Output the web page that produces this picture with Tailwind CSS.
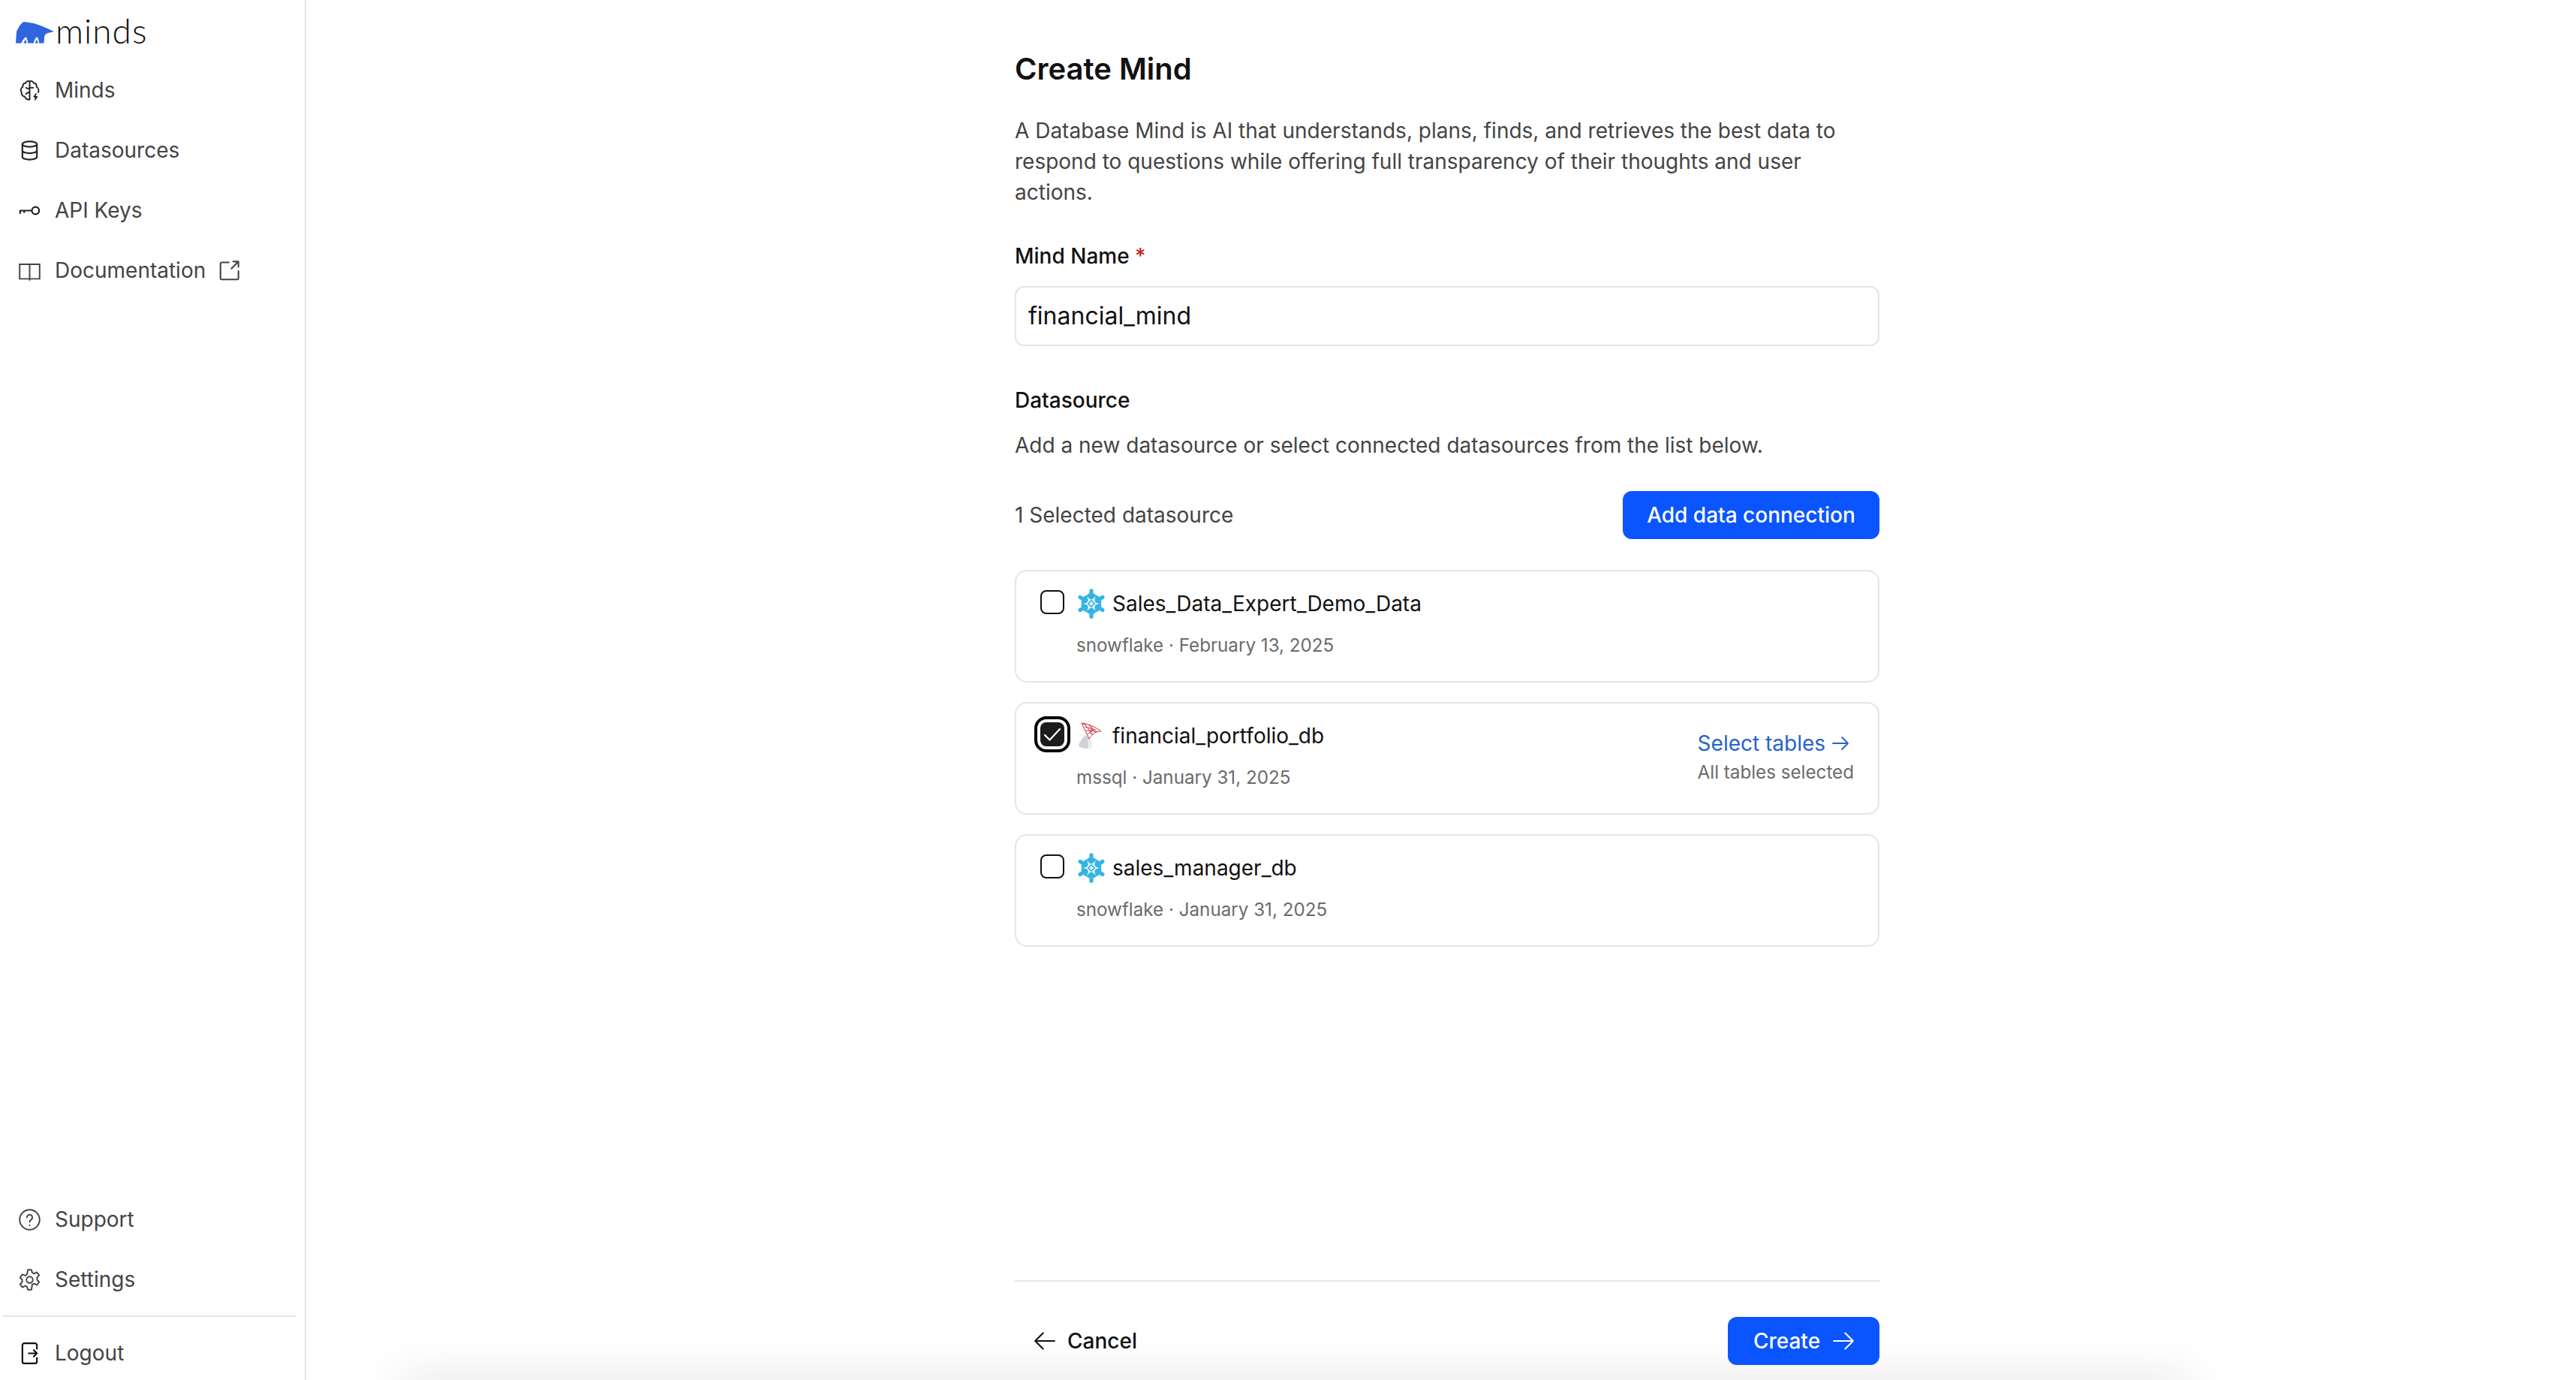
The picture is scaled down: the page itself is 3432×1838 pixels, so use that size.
<!DOCTYPE html>
<html lang="en">

<head>
    <meta charset="UTF-8">
    <title>Create Mind</title>
    <script src="https://cdn.jsdelivr.net/npm/@tailwindcss/browser@4"></script>
</head>

<body class="bg-white font-['Inter',sans-serif] text-[#111] overflow-hidden">
    <!-- snowflake logo, used by two of the rows -->
    <svg class="hidden">
        <symbol id="snowflake" viewBox="0 0 40 40">
            <g id="arm" fill="none" stroke="#33b4e4">
                <path stroke-width="5.200" stroke-linecap="round" d="M20 2.800v9"/>
                <path stroke-width="4.200" d="M14.800 7.800l4.700 4.700M25.200 7.800l-4.700 4.700"/>
            </g>
            <use href="#arm" transform="rotate(60 20 20)"/>
            <use href="#arm" transform="rotate(120 20 20)"/>
            <use href="#arm" transform="rotate(180 20 20)"/>
            <use href="#arm" transform="rotate(240 20 20)"/>
            <use href="#arm" transform="rotate(300 20 20)"/>
            <path fill="#33b4e4" d="M20 14.500 25.500 20 20 25.500 14.500 20z"/>
            <path fill="#fff" d="M20 17 23 20 20 23 17 20z"/>
            <path fill="#8fd8f2" d="M20 18.700 21.300 20 20 21.300 18.700 20z"/>
        </symbol>
    </svg>

    <div class="flex h-[1838px] w-[3432px]">
        <!-- sidebar -->
        <aside class="flex flex-col w-[408px] shrink-0 border-r-2 border-[#e5e5e5] text-[28px] text-[#444]">
            <div class="flex items-end h-20 pl-[21px] pb-[22px] gap-[2px]">
                <svg class="w-[51px] h-[29px]" viewBox="0 0 51 29">
                    <path fill="#2f66e0" d="M0 28.500 1 13C3 9 6 3 9 1L11 0 24 2C30 4 36 6 40 8L51 13 43 15C39 16 38 19 38 22L37.500 28.500H31C31 25 30 22 28 20 26 22 24 25 24 28.500H16C16 25 15 22 13.500 20 11 22 8.500 25 7.500 28.500Z"/>
                    <path fill="#2f66e0" d="M10.500 28.500C11 26.500 12 25 13 24 14 25.500 14.500 27 14.500 28.500ZM26 28.500C26 26.500 27 25 28 24 29 25.500 29.500 27 29.500 28.500Z"/>
                </svg>
                <span class="font-['Lato',sans-serif] font-light text-[46px] leading-none text-[#111] tracking-[1px] -mb-[6px]">minds</span>
            </div>
            <nav class="flex flex-col">
                <a class="flex items-center h-20 pl-[25px] gap-[19px]">
                    <svg class="w-[29px] h-[29px]" viewBox="0 0 24 24" fill="none" stroke="#222" stroke-width="1.600" stroke-linecap="round" stroke-linejoin="round"><path d="M12 2v20M12 2c-2-1-4 0-4.500 2C5 4 4 6 4.500 8 2.500 9 1.500 12 3 14c-.5 2.500 1.500 4.500 3.500 4.500C7 21 10 22.500 12 22M12 2c2-1 4 0 4.500 2C19 4 20 6 19.500 8c2 1 3 3.500 2 6M8 9c1 1 2.500 1 4 .5M12 14c-1.500 0-3 .5-4 2M16 9h-4M19 16l-2 3h3l-2 3"/></svg>
                    Minds
                </a>
                <a class="flex items-center h-20 pl-[25px] gap-[19px]">
                    <svg class="w-[29px] h-[29px]" viewBox="0 0 24 24" fill="none" stroke="#222" stroke-width="1.800"><ellipse cx="12" cy="5" rx="8" ry="3"/><path d="M4 5v14c0 1.700 3.600 3 8 3s8-1.300 8-3V5M4 12c0 1.700 3.600 3 8 3s8-1.300 8-3"/></svg>
                    Datasources
                </a>
                <a class="flex items-center h-20 pl-[25px] gap-[19px]">
                    <svg class="w-[29px] h-[29px]" viewBox="0 0 24 24" fill="none" stroke="#222" stroke-width="1.800"><circle cx="18.500" cy="12" r="4"/><path d="M14.500 12H1M1.500 12v3.500M6 12v2.500"/></svg>
                    API Keys
                </a>
                <a class="flex items-center h-20 pl-[25px] gap-[19px]">
                    <svg class="w-[29px] h-[29px]" viewBox="0 0 24 24" fill="none" stroke="#444" stroke-width="1.600"><path d="M12 5H1v16h11M12 5h11v16H12M12 5v18"/></svg>
                    <span>Documentation</span>
                    <svg class="w-[28px] h-[28px] -ml-[1px]" viewBox="0 0 24 24" fill="none" stroke="#444" stroke-width="1.800" stroke-linecap="round" stroke-linejoin="round"><path d="M11 3H3a1.500 1.500 0 0 0-1.500 1.500v16.500A1.500 1.500 0 0 0 3 22.500h17.500a1.500 1.500 0 0 0 1.500-1.500v-8M14 10 22 2M16 2h6v6"/></svg>
                </a>
            </nav>
            <div class="mt-auto flex flex-col">
                <a class="flex items-center h-20 pl-[25px] gap-[19px]">
                    <svg class="w-[29px] h-[29px]" viewBox="0 0 24 24" fill="none" stroke="#444" stroke-width="1.600" stroke-linecap="round"><circle cx="12" cy="12" r="11"/><path d="M9 9.500a3 3 0 1 1 4.500 2.600c-1 .6-1.500 1.200-1.500 2.400M12 18v.2"/></svg>
                    Support
                </a>
                <a class="flex items-center h-20 pl-[25px] gap-[19px]">
                    <svg class="w-[29px] h-[29px]" viewBox="0 0 24 24" fill="none" stroke="#444" stroke-width="1.600" stroke-linejoin="round"><circle cx="12" cy="12" r="3.500"/><path d="M10 1h4l.8 3.200 2.200 1 3-1.500 2.500 3.300-2.300 2.500v2.500l2.300 2.500-2.500 3.300-3-1.500-2.200 1L14 23h-4l-.8-3.200-2.200-1-3 1.500L1.500 17l2.300-2.500V12L1.500 9.500 4 6l3 1.500 2.200-1.500z"/></svg>
                    Settings
                </a>
                <div class="h-[2px] bg-[#e5e5e5] mt-2 ml-1 mr-3"></div>
                <a class="flex items-center h-[84px] pt-3 pl-[25px] gap-[19px]">
                    <svg class="w-[29px] h-[29px]" viewBox="0 0 24 24" fill="none" stroke="#111" stroke-width="1.800" stroke-linecap="round" stroke-linejoin="round"><path d="M20 7V3a2 2 0 0 0-2-2H6a2 2 0 0 0-2 2v18a2 2 0 0 0 2 2h12a2 2 0 0 0 2-2v-4M11 12h9M16.500 8.500 20 12l-3.500 3.500"/></svg>
                    Logout
                </a>
            </div>
        </aside>

        <!-- main -->
        <main class="relative flex-1 min-w-0">
            <!-- shadow along the bottom edge -->
            <div class="absolute top-full left-[122px] right-[512px] h-5 shadow-[0_0_60px_rgba(0,0,0,0.18)]"></div>

            <div class="relative flex flex-col w-[1152px] h-full ml-[944px] text-[28px]">
                <h1 class="mt-[68px] text-[40px] leading-[48px] font-semibold text-[#111]">Create Mind</h1>
                <p class="mt-[38px] leading-[41px] text-[#444]">A Database Mind is AI that understands, plans, finds, and retrieves the best data to respond to questions while offering full transparency of their thoughts and user actions.</p>
                <label class="mt-[44px] leading-10 font-medium text-[#111]">Mind Name <span class="text-[#d02020]">*</span></label>
                <div class="flex items-center mt-[20px] h-20 px-4 border-2 border-[#e5e5e5] rounded-xl text-[32px] text-[#111]">financial_mind</div>
                <h2 class="mt-[52px] leading-10 font-medium text-[#111]">Datasource</h2>
                <p class="mt-5 leading-10 text-[#444]">Add a new datasource or select connected datasources from the list below.</p>
                <div class="flex items-center justify-between mt-[41px]">
                    <span class="text-[#444]">1 Selected datasource</span>
                    <button class="h-16 w-[342px] rounded-xl bg-[#0a55ff] text-white font-medium">Add data connection</button>
                </div>

                <div class="flex flex-col gap-[26px] mt-[41px]">
                    <div class="flex h-[150px] border-2 border-[#e5e5e5] rounded-2xl pl-[32px] pt-[25px]">
                        <span class="w-8 h-8 rounded-lg border-2 border-[#111] bg-white shrink-0"></span>
                        <div class="ml-4 -mt-[2px]">
                            <div class="flex items-center gap-2 h-10">
                                <svg class="w-10 h-10"><use href="#snowflake"/></svg>
                                <span class="text-[#111]">Sales_Data_Expert_Demo_Data</span>
                            </div>
                            <div class="mt-5 text-[24.200px] leading-8 text-[#6b6b6b]">snowflake · February 13, 2025</div>
                        </div>
                    </div>

                    <div class="flex h-[150px] border-2 border-[#e5e5e5] rounded-2xl pl-[32px] pr-8 pt-[25px]">
                        <span class="flex items-center justify-center w-8 h-8 rounded-lg bg-[#1c1c1e] shrink-0 outline-4 outline-offset-4 outline-black">
                            <svg class="w-6 h-6" viewBox="0 0 24 24" fill="none" stroke="#fff" stroke-width="2.200" stroke-linecap="round" stroke-linejoin="round"><path d="M2 13l6.500 6.500L22 5"/></svg>
                        </span>
                        <div class="ml-4 -mt-[2px]">
                            <div class="flex items-center gap-2 h-10">
                                <svg class="w-10 h-10" viewBox="0 0 40 40" fill="none"><path fill="#cfd3d7" d="M12 19C8 23 3 30 3 33c0 2 6 4 12 4 4 0 6-1 6-2 0-5-3-12-9-16z"/><path fill="#eef0f2" d="M15 24c3 3 5 7 6 11-1 1-3 2-6 2 1-4 1-9 0-13z"/><path stroke="#c9343a" stroke-width="1" d="M7 3c9 1 18 5 26 11-7 0-12 3-16 10M7 3l10 21M11 4l11 15M16 5l10 11M21 7l-2 11M11 8l15 4M13 13l14 1M15 18l8-7M7 3l6 3"/></svg>
                                <span class="text-[#111]">financial_portfolio_db</span>
                            </div>
                            <div class="mt-5 text-[24.200px] leading-8 text-[#6b6b6b]">mssql · January 31, 2025</div>
                        </div>
                        <div class="ml-auto mt-2">
                            <div class="flex items-center gap-2 text-[#2563c9] leading-10">Select tables
                                <svg class="w-6 h-6" viewBox="0 0 24 24" fill="none" stroke="#2563c9" stroke-width="1.800" stroke-linecap="round" stroke-linejoin="round"><path d="M2 12h20M14 4l8 8-8 8"/></svg>
                            </div>
                            <div class="mt-[3px] text-[24.200px] leading-8 text-[#6b6b6b]">All tables selected</div>
                        </div>
                    </div>

                    <div class="flex h-[150px] border-2 border-[#e5e5e5] rounded-2xl pl-[32px] pt-[25px]">
                        <span class="w-8 h-8 rounded-lg border-2 border-[#111] bg-white shrink-0"></span>
                        <div class="ml-4 -mt-[2px]">
                            <div class="flex items-center gap-2 h-10">
                                <svg class="w-10 h-10"><use href="#snowflake"/></svg>
                                <span class="text-[#111]">sales_manager_db</span>
                            </div>
                            <div class="mt-5 text-[24.200px] leading-8 text-[#6b6b6b]">snowflake · January 31, 2025</div>
                        </div>
                    </div>
                </div>

                <div class="mt-auto mb-5 border-t-2 border-[#e5e5e5] pt-[47px] flex items-center justify-between">
                    <button class="flex items-center gap-4 pl-[26px] font-medium text-[#111]">
                        <svg class="w-[28px] h-[28px]" viewBox="0 0 24 24" fill="none" stroke="#111" stroke-width="1.800" stroke-linecap="round" stroke-linejoin="round"><path d="M23 12H1M10 3l-9 9 9 9"/></svg>
                        Cancel
                    </button>
                    <button class="flex items-center justify-center gap-[17px] h-16 w-[202px] rounded-xl bg-[#0a55ff] text-white font-medium">
                        Create
                        <svg class="w-[28px] h-[28px]" viewBox="0 0 24 24" fill="none" stroke="#fff" stroke-width="1.800" stroke-linecap="round" stroke-linejoin="round"><path d="M1 12h22M14 3l9 9-9 9"/></svg>
                    </button>
                </div>
            </div>
        </main>
    </div>
</body>

</html>
